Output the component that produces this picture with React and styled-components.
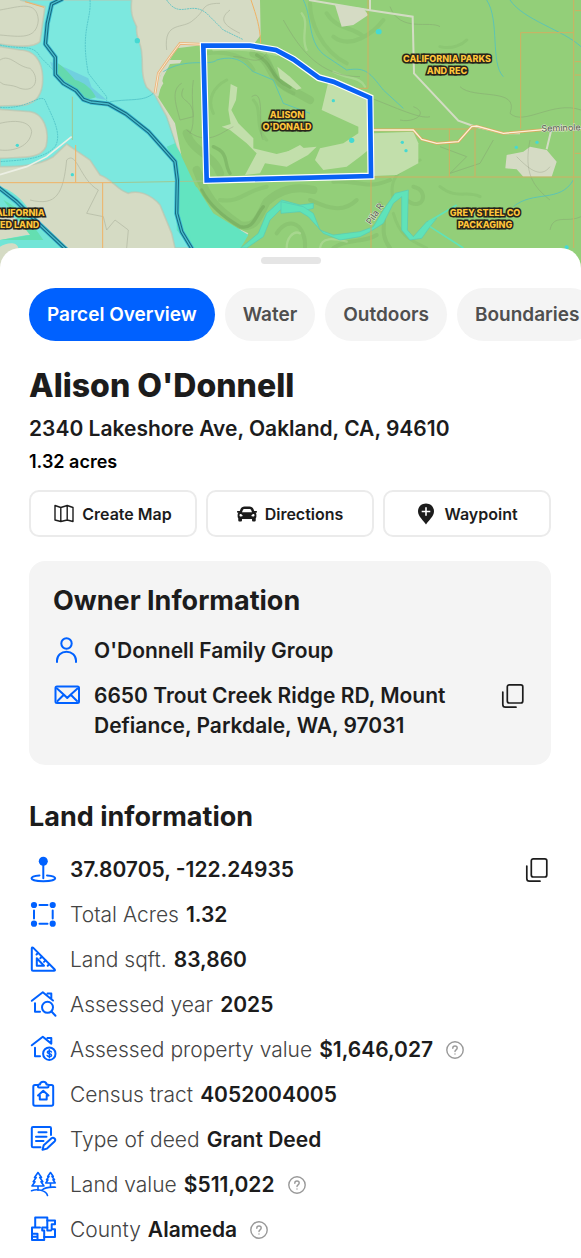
import React from "react";
import styled, { createGlobalStyle } from "styled-components";
import { FaCar } from "react-icons/fa";

const App = () => {
    return (
    <>
        <GlobalStyle />
        <ParcelMap />
        <Sheet>
            <Grabber />
            <Tabs aria-label="Parcel sections">
                {tabs.map(tab => (
                    <Tab key={tab} type="button" $active={tab === "Parcel Overview"}>{tab}</Tab>
                ))}
            </Tabs>

            <Content>
                <Title>Alison O'Donnell</Title>
                <Address>2340 Lakeshore Ave, Oakland, CA, 94610</Address>
                <Acres>1.32 acres</Acres>

                <Actions>
                    <ActionButton type="button"><MapIcon />Create Map</ActionButton>
                    <ActionButton type="button"><FaCar size={20} />Directions</ActionButton>
                    <ActionButton type="button"><WaypointIcon />Waypoint</ActionButton>
                </Actions>

                <OwnerCard>
                    <Heading>Owner Information</Heading>
                    <Rows>
                        <Row>
                            <LineIcon name="user" />
                            <Value>O'Donnell Family Group</Value>
                        </Row>
                        <Row>
                            <LineIcon name="mail" />
                            <Value>6650 Trout Creek Ridge RD, Mount Defiance, Parkdale, WA, 97031</Value>
                            <CopyButton label="Copy mailing address" />
                        </Row>
                    </Rows>
                </OwnerCard>

                <Heading>Land information</Heading>
                <Rows $loose>
                    {landRows.map(row => (
                        <Row key={row.icon}>
                            <LineIcon name={row.icon} />
                            <Field>
                                {row.label && <Label>{row.label}</Label>}
                                <Value>{row.value}</Value>
                            </Field>
                            {row.help && <HelpButton label={`About ${row.label}`} />}
                            {row.copy && <CopyButton label="Copy coordinates" />}
                        </Row>
                    ))}
                </Rows>
            </Content>
        </Sheet>
    </>
    );
}

const tabs = ["Parcel Overview", "Water", "Outdoors", "Boundaries"];

const landRows = [
    { icon: "pin", value: "37.80705, -122.24935", copy: true },
    { icon: "area", label: "Total Acres", value: "1.32" },
    { icon: "ruler", label: "Land sqft.", value: "83,860" },
    { icon: "houseSearch", label: "Assessed year", value: "2025" },
    { icon: "houseDollar", label: "Assessed property value", value: "$1,646,027", help: true },
    { icon: "census", label: "Census tract", value: "4052004005" },
    { icon: "deed", label: "Type of deed", value: "Grant Deed" },
    { icon: "trees", label: "Land value", value: "$511,022", help: true },
    { icon: "county", label: "County", value: "Alameda", help: true },
];

const mapLabels = [
    { lines: ["ALISON", "O'DONALD"], x: 287, y: 121 },
    { lines: ["CALIFORNIA PARKS", "AND REC"], x: 447, y: 65 },
    { lines: ["CALIFORNIA", "FED LAND"], x: 17, y: 219 },
    { lines: ["GREY STEEL CO", "PACKAGING"], x: 485, y: 219 },
];

const MAP_WIDTH = 581;
const MAP_HEIGHT = 270;

const HIGHWAYS = "M188 -4L155 12L142 70L136 132L166 172V224L190 250L228 272L250 298L272 306L325 312L378 342L445 395L525 485L532 540L530 640L545 695L578 750M-5 562L50 605L110 665L200 750";
const PARCEL = "M610 137L750 137L828 150L880 178L956 233L1000 245L1110 293L1113 528L620 541Z";
const ROAD = "M1110 390H1240L1265 418L1310 430L1375 425L1415 380L1430 378L1510 400L1640 388L1743 385";
const LANE = "M465 280L475 220L510 170L540 130L610 133";

const ParcelMap = () => (
    <MapFrame>
        <svg viewBox="0 0 1743 810" preserveAspectRatio="none" aria-hidden="true">
            <rect width="1743" height="810" fill="#d5dbc4" />

            {/* water */}
            <path fill="#7ce8df" stroke="#c0c2ab" strokeWidth="5" strokeOpacity="0.6" d="M60 0H395C390 40 400 60 410 80C405 110 425 130 425 160C430 190 420 225 440 262L465 285L500 350L530 440L560 510L590 560L640 640L720 690L720 744L525 744L515 700L480 615C450 580 410 570 385 580C350 570 340 540 300 525L270 480L200 432L160 470C110 500 50 500 0 500V475C60 470 120 480 138 440C150 390 130 340 90 335L0 328V318L70 316C110 310 130 280 128 230C126 180 100 150 60 150L0 140V132C50 140 100 145 120 125L135 20L60 0Z" />
            <path fill="#62e4c0" d="M490 320L530 440L600 560L720 690V744H575L530 690L530 500L500 440L525 430Z" />
            <path fill="#69bfe0" opacity="0.6" d="M150 185L200 205L265 235L275 262L320 300L290 295L265 262L220 240L190 210L165 230Z" />
            <path fill="#64d9ae" d="M168 185C190 200 205 215 225 240C250 245 275 265 288 292L260 300L228 270L170 225Z" />
            <path fill="#72e5d7" d="M0 560C40 570 80 610 100 650L200 744H0V720L80 705L110 705L0 620Z" />
            <path fill="#64dfb1" d="M10 600C50 620 90 660 130 720L0 720L90 705Z" />
            <path fill="#d5dbc4" d="M0 740C20 728 50 724 55 744L30 760L0 790Z" />

            {/* forest */}
            <path fill="#93cf79" d="M780 0H1743V810H690L722 735L745 700L640 650L585 555L545 470L525 370L470 285L490 250L480 230L530 145L610 135L760 135L782 105Z" />
            <path fill="#62e4c0" d="M590 560L640 640L745 705L722 744H575L560 620Z" />

            {/* relief */}
            <g fill="none" stroke="#5c8f4a" strokeLinecap="round" strokeLinejoin="round">
                <path strokeWidth="24" opacity="0.15" d="M590 510C620 590 640 620 720 675C770 690 780 640 800 605C850 560 900 560 940 570M560 400C580 460 640 460 660 520M760 160C820 180 800 230 860 262L930 300" />
                <path strokeWidth="10" opacity="0.3" d="M605 570C625 610 660 645 720 680C760 690 765 650 790 620M640 440C690 460 670 490 690 520M770 165C820 190 805 230 870 262" />
                <path strokeWidth="12" opacity="0.13" d="M620 160C680 150 740 170 760 210M800 170C830 220 820 260 880 280M930 10C930 60 960 150 1040 190M1000 110C1050 150 1120 100 1150 60M980 40C1010 90 1060 80 1090 110M660 600C720 610 740 570 800 560" />
                <path strokeWidth="12" opacity="0.15" d="M1070 600C1020 650 960 610 930 600M1140 610C1170 660 1130 690 1170 744M1240 560C1290 570 1270 640 1220 600M830 700C870 640 920 680 915 744M1000 744C1040 715 1090 730 1130 705M1000 545C1080 540 1100 570 1170 540" />
                <path strokeWidth="9" opacity="0.13" d="M1180 600C1160 520 1220 500 1260 480M1320 560C1370 600 1400 570 1440 590M1320 140C1360 150 1390 130 1400 120M1180 640C1200 710 1230 720 1280 744M640 340C620 300 640 260 680 240M760 300C790 330 760 380 800 420" />
            </g>
            <g fill="none" stroke="#c5e3b0" strokeWidth="7" strokeLinecap="round" opacity="0.4">
                <path d="M905 40C930 70 900 110 920 150M1000 215C1050 240 1080 230 1095 260M960 744C965 710 1000 715 1040 725M860 744C860 715 880 690 900 700M640 150C700 145 780 150 830 165" />
            </g>

            {/* clearings */}
            <g fill="#c2dfab">
                <path d="M692 252L712 262L708 300L694 330L715 370L760 415L760 445L830 462L900 445L950 440L924 465L860 500L795 490L780 520L735 525L770 460L740 430L690 390L665 380L692 372L685 330Z" />
                <path d="M832 200L870 230L905 265L890 270L840 235Z" />
                <path d="M985 245L1105 295L1105 450L1080 470L1040 500L970 510L945 480L960 445L1030 430L1075 400L1075 380L965 330Z" />
                <path d="M1120 400L1240 395L1255 430L1255 490L1190 525L1120 528Z" />
                <path d="M843 465L900 435L925 455L880 480L843 490Z" />
            </g>
            <g fill="#d5dbc4">
                <path d="M1005 15L1090 25L1105 45L1060 75L1025 80Z" />
                <path d="M1520 465L1570 455L1590 440L1640 450L1670 485L1655 530H1570L1550 508L1516 505Z" />
                <path d="M505 180L545 180L540 190L510 192L490 230L475 290L465 285L475 240Z" />
            </g>

            {/* contours */}
            <g fill="none" stroke="#7a806c" strokeWidth="2" opacity="0.4">
                <path d="M0 30C60 20 110 0 115 60C110 120 60 110 0 105M0 180C30 160 50 200 90 205C120 230 110 280 60 265C30 250 10 260 0 245M0 370C40 360 90 360 95 395C90 440 40 455 0 450" />
                <path d="M500 150C490 60 550 90 580 60C620 30 600 10 660 10M690 30C650 60 680 80 720 100M90 600C170 620 190 580 200 480C230 450 240 540 295 570L260 640L310 650L320 690L345 660L385 690L380 744" />
                <path d="M545 250C510 270 530 320 540 360L580 350C580 290 530 310 550 265M580 240C570 300 590 370 570 400M755 290C800 260 770 400 790 420M560 390C620 440 660 400 700 380M700 170C750 170 770 200 800 160" />
                <path d="M1170 20C1200 100 1290 60 1320 80M1240 320C1290 340 1240 370 1200 360M1380 260C1420 300 1560 260 1530 340C1570 380 1660 300 1743 330M1320 440L1400 470L1350 520L1440 490L1480 420M1550 470C1580 500 1620 540 1650 500M1590 420C1570 520 1600 560 1650 600M1650 690C1660 640 1700 670 1743 650M850 60C900 150 960 230 1080 230M1100 290C1160 310 1260 360 1290 350" />
            </g>

            {/* streams */}
            <g fill="none" stroke="#4cc0c6" strokeWidth="3" opacity="0.75">
                <path d="M270 0C275 60 240 90 265 220L320 290V305M500 0C540 60 570 0 620 40L670 90L728 118M0 322C80 330 120 280 135 300C150 340 190 400 165 440C130 480 60 480 0 485M0 135C60 150 100 130 120 170L165 215" strokeDasharray="6 2" />
                <path d="M490 215C560 170 630 200 650 180C720 160 740 200 760 215L820 240L850 310L930 340M910 0C940 60 920 130 980 170L1040 210C1100 200 1110 220 1150 270L1210 325M1460 0C1500 60 1470 190 1510 230M1530 0C1570 60 1690 90 1743 140M1540 620C1600 570 1680 610 1720 540" />
                <path d="M330 305C400 295 430 305 460 280" />
            </g>
            <g fill="#5fe3b9" stroke="#58c9b5" strokeWidth="2">
                <path d="M722 744L775 700L800 640L845 600L900 615L940 610V625L900 635L840 630L810 660L790 710L740 744Z" />
                <path d="M843 605L910 620L940 640L960 690L1000 705L1080 695L1120 680L1150 630L1185 580L1225 570L1222 690L1240 710L1280 665L1310 655L1290 680L1265 715L1230 720L1205 690L1205 590L1180 610L1150 670L1110 695L1080 710L1020 720L970 700L925 650L900 635L843 640Z" />
            </g>
            <path d="M1285 665L1370 615M1290 680L1390 744" fill="none" stroke="#5fe3b9" strokeWidth="5" />
            <g fill="#45d9d2">
                <ellipse cx="1136" cy="95" rx="9" ry="8" />
                <circle cx="1000" cy="302" r="5" />
                <circle cx="1055" cy="421" r="8" />
                <circle cx="1207" cy="427" r="5" />
                <circle cx="1218" cy="452" r="5" />
                <circle cx="1549" cy="442" r="5" />
                <circle cx="1611" cy="427" r="5" />
                <circle cx="1700" cy="742" r="6" />
                <circle cx="412" cy="122" r="8" />
                <circle cx="52" cy="436" r="5" />
                <circle cx="217" cy="524" r="5" />
            </g>

            {/* property lines */}
            <g fill="none" stroke="#cfb062" strokeWidth="3">
                <path d="M227 435V547M0 548H335M308 548V744M75 5L132 22M753 0C770 50 780 80 782 130" stroke="#efb265" />
                <path d="M217 290V420M335 548L620 543" stroke="#9fc893" />
                <path d="M1104 0V265H1070M1113 530V744M1120 531H1743M1562 386V98H1720M1721 0V744M1348 386V530M1425 386V530M1120 387H1430M1725 32H1743M1725 185H1743M1725 225H1743M1725 460H1743" />
            </g>

            {/* roads */}
            <path d="M0 524L80 500L140 470L215 410" fill="none" stroke="#ecefe4" strokeWidth="5" />
            <path d={LANE} fill="none" stroke="#edb47a" strokeWidth="8" />
            <path d={LANE} fill="none" stroke="#f5ead2" strokeWidth="3" />
            <path d="M927 0L1105 30L1238 50L1242 220L1375 362L1420 378L1510 400H1560M1110 0V30M1655 385L1640 448" fill="none" stroke="#d3dcc4" strokeWidth="6" />
            <path d={ROAD} fill="none" stroke="#dfa85c" strokeWidth="8" />
            <path d={ROAD} fill="none" stroke="#faf2da" strokeWidth="4" />

            {/* highways */}
            <g fill="none" strokeLinejoin="round">
                <path d={HIGHWAYS} stroke="#3cbcd4" strokeWidth="15" />
                <path d={HIGHWAYS} stroke="#17687f" strokeWidth="10" />
                <path d={HIGHWAYS} stroke="#48bccb" strokeWidth="4" />
            </g>

            {/* selected parcel */}
            <path d={PARCEL} fill="none" stroke="#fff" strokeWidth="21" />
            <path d={PARCEL} fill="none" stroke="#0862f5" strokeWidth="14" />
        </svg>

        {mapLabels.map(label => (
            <MapLabel key={label.lines[0]} $x={label.x} $y={label.y}>
                {label.lines[0]}<br />{label.lines[1]}
            </MapLabel>
        ))}
        <StreetName $x={561} $y={128} $angle={-2}>Seminole</StreetName>
        <StreetName $x={375} $y={214} $angle={-55}>Pila R</StreetName>
    </MapFrame>
);

const icons = {
    user: <>
        <circle cx="13.5" cy="7.5" r="5.2" />
        <path d="M4 26V24.5C4 19.5 8.2 15.8 13.5 15.8S23 19.5 23 24.5V26" />
    </>,
    mail: <>
        <rect x="2.5" y="5.5" width="23.5" height="16.5" rx="1.5" />
        <path d="M4 7.5L11.5 14.2L14.25 17L17 14.2L24.5 7.5M4.5 20L10 14.5L11.5 14.2M24 20L18.5 14.5L17 14.2" />
    </>,
    pin: <>
        <circle cx="14.3" cy="6.3" r="4.5" fill="currentColor" stroke="none" />
        <path d="M14.3 9V23.2M10.5 20.4C5.5 20.8 2.5 21.8 2.5 23.2C2.5 25 7.8 26.2 14.3 26.2S26.2 25 26.2 23.2C26.2 21.8 23 20.8 18 20.4" />
    </>,
    area: <>
        <g fill="currentColor" stroke="none">
            <circle cx="5" cy="5" r="3.1" />
            <circle cx="23.7" cy="5" r="3.1" />
            <circle cx="5" cy="23.7" r="3.1" />
            <circle cx="23.7" cy="23.7" r="3.1" />
        </g>
        <path d="M10.5 5H18.5M10.5 23.7H18.5M5 10.5V18.5M23.7 10.5V18.5" />
    </>,
    ruler: <>
        <path d="M2.8 3.5V24.5Q2.8 25.7 4 25.7H24.8Q26.8 25.7 25.5 24.3L4.3 2.9Q2.8 1.7 2.8 3.5Z" />
        <path d="M7.8 13.3V20.7H15ZM9 8L7.5 9.5M12.8 11.7L11.3 13.2M16.5 15.4L15 16.9M20.2 19.2L18.7 20.7" />
    </>,
    houseSearch: <>
        <path d="M2.8 10.8L13.8 2.3L24 10.5M18.5 3.5H22.3V8.5M6 13.2V21.7H11" />
        <circle cx="18.5" cy="17.3" r="5.5" />
        <path d="M22.5 21.5L26.5 25.7" />
    </>,
    houseDollar: <>
        <path d="M2.8 10.3L13.8 1.8L22.3 8.6M18.5 3H22.3V8.6M6 12.7V21.2H11" />
        <circle cx="20.3" cy="18.7" r="6.2" />
        <path strokeWidth="1.5" d="M22.4 17C22 15.5 18.3 15.5 18.3 17.3C18.3 19.2 22.5 18.2 22.5 20.2C22.5 22 18.5 22 18.1 20.4M20.3 14.7V22.7" />
    </>,
    census: <>
        <path d="M9 5H6Q4.3 5 4.3 6.7V24Q4.3 25.7 6 25.7H22.5Q24.2 25.7 24.2 24V6.7Q24.2 5 22.5 5H19.5M9 6.5V5.5Q9 4.5 10 4.5H11C11.3 0.8 17.2 0.8 17.5 4.5H18.5Q19.5 4.5 19.5 5.5V6.5Q19.5 7.5 18.5 7.5H10Q9 7.5 9 6.5Z" />
        <path d="M9 15.5L14.25 10.8L19.5 15.5H17.7V19.5H10.8V15.5Z" />
    </>,
    deed: <>
        <path d="M11.5 22.3H4Q2.8 22.3 2.8 21V3.3Q2.8 2 4 2H20.8Q22 2 22 3.3V10M9.5 7.3H17.5M7 11.7H17.5M7 16H14.5" />
        <path d="M13.5 24.8L14.7 20.3L22.5 13.3C24.5 11.7 27.5 14.5 25.5 16.5L18 23.6Z" />
    </>,
    trees: <g strokeWidth="1.6">
        <path d="M9 2.5L5.5 7.5H7.2L4.2 11.7H6L3 16H15L12 11.7H13.8L10.8 7.5H12.5ZM9 16V20.3" />
        <path d="M21.5 2.5L18.7 6.5H20L17.5 9.7H19L16.8 13H26.2L24 9.7H25.5L23 6.5H24.3ZM21.5 13V17" />
        <path d="M2.5 20.7C8 18.7 17 20 18.5 25.5M13 20C17 16.5 22 17 26.5 17.2" />
    </g>,
    county: <>
        <path d="M6.2 12.5V2.5H18.3V12.5H13.2V15.5H15.2V25H3V12.5H11M3 18.8H8.5V25M3 21.8H8.5" />
        <path d="M18.3 5.5H26V9.3H22.7V14.3H26V22H15.2M18.3 12.5V15.5H22" />
    </>,
};

const LineIcon = ({ name }) => (
    <IconSvg viewBox="0 0 28 28" aria-hidden="true">{icons[name]}</IconSvg>
);

const MapIcon = () => (
    <svg width="20" height="20" viewBox="0 0 20 20" fill="none" stroke="currentColor" strokeWidth="1.4" strokeLinejoin="round" aria-hidden="true">
        <path d="M1 1.5L6.8 3.5L13.2 1.5L19 3.5V17.5L13.2 16L6.8 17.5L1 16ZM6.8 3.5V17.5M13.2 1.5V16" />
    </svg>
);

const WaypointIcon = () => (
    <svg width="20" height="22" viewBox="0 0 20 22" aria-hidden="true">
        <path d="M10 0.5C5.3 0.5 2 4 2 8.3C2 13.5 7.5 17.5 10 21.5C12.5 17.5 18 13.5 18 8.3C18 4 14.7 0.5 10 0.5Z" fill="currentColor" />
        <path d="M10 4.2V12.8M5.7 8.5H14.3" stroke="#fff" strokeWidth="1.6" />
    </svg>
);

const CopyButton = ({ label }) => (
    <IconButton type="button" aria-label={label} $push>
        <svg width="28" height="28" viewBox="0 0 28 28" fill="none" stroke="currentColor" strokeWidth="1.7" strokeLinecap="round" aria-hidden="true">
            <rect x="8.3" y="2.8" width="15.5" height="18.2" rx="2" />
            <path d="M3.8 10V22.5Q3.8 25.2 6.5 25.2H17" />
        </svg>
    </IconButton>
);

const HelpButton = ({ label }) => (
    <IconButton type="button" aria-label={label}>
        <svg width="18" height="18" viewBox="0 0 18 18" fill="none" stroke="#999" strokeWidth="1.4" strokeLinecap="round" aria-hidden="true">
            <circle cx="9" cy="9" r="8.2" />
            <path d="M6.8 7.2C6.8 4.3 11.2 4.4 11.2 7.1C11.2 8.9 9 8.8 9 10.6M9 12.9V13" />
        </svg>
    </IconButton>
);

const GlobalStyle = createGlobalStyle`
    *,
    *::before,
    *::after {
        box-sizing: border-box;
    }

    body {
        margin: 0;
        background-color: #fff;
        color: #1c1c1c;
        font-family: Inter, "Liberation Sans", sans-serif;
        overflow-x: hidden;
    }

    button {
        font: inherit;
        color: inherit;
        cursor: pointer;
    }
`;

const MapFrame = styled.div`
    position: relative;
    height: ${MAP_HEIGHT}px;
    overflow: hidden;

    > svg {
        display: block;
        width: 100%;
        height: 100%;
    }
`;

const MapText = styled.span`
    position: absolute;
    left: ${({ $x }) => $x / MAP_WIDTH * 100}%;
    top: ${({ $y }) => $y / MAP_HEIGHT * 100}%;
    white-space: nowrap;
    font-size: 9px;
    line-height: 12px;
    paint-order: stroke fill;
`;

const MapLabel = styled(MapText)`
    transform: translate(-50%, -50%);
    color: #ffc53a;
    font-weight: 800;
    text-align: center;
    -webkit-text-stroke: 3px #26241a;
`;

const StreetName = styled(MapText)`
    transform: translate(-50%, -50%) rotate(${({ $angle }) => $angle}deg);
    color: #55604f;
    -webkit-text-stroke: 1px #dfe9d3;
`;

const Sheet = styled.main`
    position: relative;
    display: flex;
    flex-direction: column;
    margin-top: -22px;
    padding-top: 9px;
    border-radius: 20px 20px 0 0;
    background-color: #fff;
`;

const Grabber = styled.div`
    align-self: center;
    width: 60px;
    height: 7px;
    border-radius: 4px;
    background-color: #e5e5e5;
`;

const Tabs = styled.nav`
    display: flex;
    gap: 10px;
    padding: 0 29px;
    margin-top: 24px;
    overflow: hidden;
`;

const Tab = styled.button`
    flex: none;
    height: 53px;
    padding: 0 18px;
    border: 0;
    border-radius: 27px;
    background-color: ${({ $active }) => $active ? "#0061ff" : "#f4f4f4"};
    color: ${({ $active }) => $active ? "#fff" : "#4f4f4f"};
    font-size: 19px;
    font-weight: 600;
`;

const Content = styled.div`
    display: flex;
    flex-direction: column;
    padding: 25px 30px 13px 29px;
`;

const Title = styled.h1`
    margin: 0;
    font-size: 32px;
    font-weight: 800;
    line-height: 40px;
`;

const Address = styled.p`
    margin: 8px 0 0;
    font-size: 21px;
    font-weight: 600;
    line-height: 30px;
`;

const Acres = styled.p`
    margin: 6px 0 0;
    color: #000;
    font-size: 18px;
    font-weight: 600;
    line-height: 24px;
`;

const Actions = styled.div`
    display: grid;
    grid-template-columns: repeat(3, 1fr);
    gap: 9px;
    margin-top: 16px;
`;

const ActionButton = styled.button`
    display: flex;
    align-items: center;
    justify-content: center;
    gap: 8px;
    height: 47px;
    padding: 0;
    border: 2px solid #ebebeb;
    border-radius: 10px;
    background-color: #fff;
    font-size: 16px;
    font-weight: 600;
`;

const OwnerCard = styled.section`
    margin: 24px 0 36px;
    padding: 24px;
    border-radius: 16px;
    background-color: #f4f4f4;
`;

const Heading = styled.h2`
    margin: 0;
    font-size: 27px;
    font-weight: 700;
    line-height: 32px;
`;

const Rows = styled.div`
    display: flex;
    flex-direction: column;
    gap: 15px;
    margin-top: ${({ $loose }) => $loose ? "22px" : "19px"};
`;

const Row = styled.div`
    display: flex;
    align-items: flex-start;
    gap: 13px;
    font-size: 21px;
    line-height: 30px;
`;

const Field = styled.div`
    display: flex;
    gap: 7px;
`;

const Label = styled.span`
    color: #444;
    font-weight: 300;
`;

const Value = styled.span`
    font-weight: 600;
`;

const IconSvg = styled.svg`
    flex: none;
    width: 28px;
    height: 28px;
    fill: none;
    stroke: currentColor;
    stroke-width: 2;
    stroke-linecap: round;
    stroke-linejoin: round;
    color: #0061ff;
`;

const IconButton = styled.button`
    display: flex;
    align-items: center;
    height: 30px;
    margin-left: ${({ $push }) => $push ? "auto" : "0"};
    padding: 0;
    border: 0;
    background: none;
`;

export default App;
